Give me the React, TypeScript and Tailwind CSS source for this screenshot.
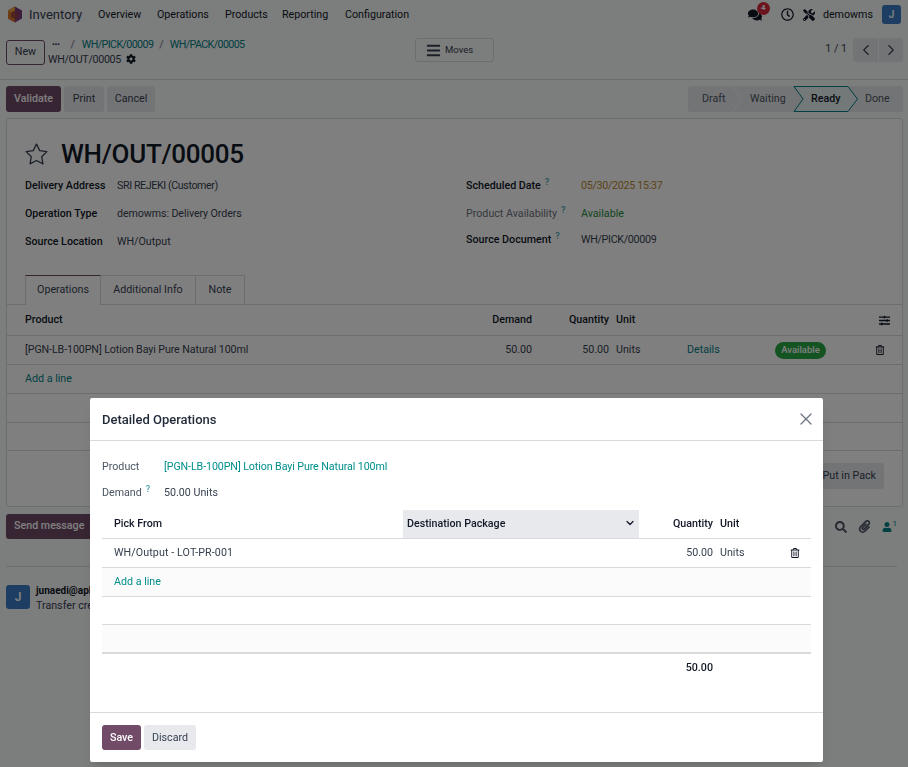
import React from 'react';
import { FaBars, FaCog, FaComments, FaPaperclip, FaRegClock, FaRegTrashAlt, FaSearch, FaSlidersH, FaTools, FaUser } from 'react-icons/fa';
import { FiChevronDown, FiChevronLeft, FiChevronRight, FiStar, FiX } from 'react-icons/fi';

const font = { fontFamily: 'Roboto, "Noto Sans", sans-serif' };

const Logo = () => (
  <svg width="16" height="17" viewBox="0 0 16 17">
    <polygon points="8,0.5 15,4.5 15,12.5 8,16.5 1,12.5 1,4.5" fill="#7d3c7c" />
    <polygon points="8,0.5 1,4.5 1,12.5 8,16.5 8,8.5" fill="#d9792a" />
    <polygon points="8,0.5 1,4.5 4,6.5 8,4.5" fill="#e8a33c" />
    <polygon points="8,4.5 12,6.5 12,11 8,13 4,11 4,6.5" fill="#8f3f3f" opacity="0.8" />
  </svg>
);

const Help = () => <sup className="text-[9px] font-semibold text-[#4fa9ae] ml-1 -top-1 relative">?</sup>;

const FieldRow = ({ label, value, h = 'h-7', w = 'w-[92px]', valueClass = 'text-[#374151]', labelClass = 'font-medium text-[#111827]', help = false }: { label: string; value: string; h?: string; w?: string; valueClass?: string; labelClass?: string; help?: boolean }) => (
  <div className={`flex items-center ${h}`}>
    <div className={`${w} shrink-0 ${labelClass}`}>
      {label}
      {help && <Help />}
    </div>
    <div className={valueClass}>{value}</div>
  </div>
);

const Page = () => (
  <div className="h-[767px] bg-[#f9fafb] text-[10.7px] text-[#374151] overflow-hidden">
    {/* top menu */}
    <div className="h-[29px] flex items-center pl-[7px] pr-[7px]">
      <Logo />
      <span className="ml-[6px] text-[13px] text-[#374151] w-[69px] pt-px">Inventory</span>
      <nav className="flex text-[#111827] pt-px">
        <span className="w-[59px]">Overview</span>
        <span className="w-[68px]">Operations</span>
        <span className="w-[57px]">Products</span>
        <span className="w-[63px]">Reporting</span>
        <span>Configuration</span>
      </nav>
      <div className="ml-auto flex items-center text-[#111827]">
        <div className="relative mr-[19px]">
          <FaComments size={14} />
          <span className="absolute -top-[6px] left-[9px] w-[13px] h-[13px] rounded-full bg-[#d9283a] text-white text-[8px] font-bold flex items-center justify-center">4</span>
        </div>
        <FaRegClock size={13} className="mr-[9px]" />
        <FaTools size={12} className="mr-[8px]" />
        <span className="mr-[9px] pt-px">demowms</span>
        <span className="w-[19px] h-[19px] rounded-[3px] bg-[#3b7cc4] text-white text-[10px] font-semibold flex items-center justify-center">J</span>
      </div>
    </div>

    {/* control panel */}
    <div className="h-[51px] border-b border-[#d8dadd] flex items-center pl-[6px] pr-[5px] relative">
      <button className="w-[39px] h-[25px] -mt-[4px] border border-[#714b67] rounded-[3px] text-[#374151] flex items-center justify-center">New</button>
      <div className="ml-[7px] leading-[15px] -mt-[5px]">
        <div className="flex items-center">
          <span className="font-bold text-[#374151] text-[8px] tracking-tighter">•••</span>
          <span className="ml-[11px] text-[#6b7280]">/</span>
          <span className="ml-[7px] text-[#017e84] tracking-[-0.6px]">WH/PICK/00009</span>
          <span className="ml-[6px] text-[#6b7280]">/</span>
          <span className="ml-[6px] text-[#017e84] tracking-[-0.6px]">WH/PACK/00005</span>
        </div>
        <div className="flex items-center -ml-[4px]">
          <span className="tracking-[-0.3px]">WH/OUT/00005</span>
          <FaCog size={10} className="ml-[5px] text-[#111827]" />
        </div>
      </div>
      <button className="absolute left-[415px] top-[9px] w-[79px] h-[24px] border border-[#d8dadd] rounded-[3px] flex items-center pl-[10px] gap-[4px] text-[9.5px]">
        <FaBars size={15} />
        Moves
      </button>
      <div className="ml-auto flex items-center -mt-[9px]">
        <span className="mr-[6px]">1 / 1</span>
        <div className="flex gap-px">
          <span className="w-[25px] h-[24px] bg-[#e7e9ed] rounded-l-[3px] flex items-center justify-center"><FiChevronLeft size={18} strokeWidth={1.5} /></span>
          <span className="w-[24px] h-[24px] bg-[#e7e9ed] rounded-r-[3px] flex items-center justify-center"><FiChevronRight size={18} strokeWidth={1.5} /></span>
        </div>
      </div>
    </div>

    {/* action row */}
    <div className="h-[38px] flex items-center pl-[6px] pr-[5px]">
      <div className="flex gap-[3px]">
        <button className="w-[55px] h-[26px] rounded-[3px] bg-[#714b67] text-white font-medium">Validate</button>
        <button className="w-[40px] h-[26px] rounded-[3px] bg-[#e7e9ed]">Print</button>
        <button className="w-[48px] h-[26px] rounded-[3px] bg-[#e7e9ed]">Cancel</button>
      </div>
      <div className="ml-auto relative w-[215px] h-[26px] bg-[#e7e9ed] rounded-[3px] flex items-center text-[#4b5563]">
        <svg className="absolute inset-0" width="215" height="26" viewBox="0 0 215 26">
          <polyline points="44,0 54,13 44,26" fill="none" stroke="#f5f6f7" strokeWidth="1" />
          <polygon points="106,0.5 160,0.5 169.5,13 160,25.5 106,25.5 115,13" fill="#e6f2f3" stroke="#017e84" strokeWidth="1" />
        </svg>
        <span className="relative w-[62px] pl-[14px]">Draft</span>
        <span className="relative w-[61px]">Waiting</span>
        <span className="relative w-[54px] text-[#111827] font-medium">Ready</span>
        <span className="relative">Done</span>
      </div>
    </div>

    {/* sheet */}
    <div className="mx-[6px] mr-[5px] h-[389px] bg-white border border-[#d8dadd] rounded-[3px] relative">
      <div className="pl-[18px] pr-[18px] pt-[15px]">
        <div className="flex items-center h-[40px]">
          <FiStar size={25} strokeWidth={1.25} className="text-[#374151] -ml-px" />
          <h1 className="ml-[12px] text-[26px] font-medium text-[#111827] leading-none tracking-[-0.3px]">WH/OUT/00005</h1>
        </div>
        <div className="flex -mt-[2px]">
          <div className="w-[441px]">
            <FieldRow label="Delivery Address" value="SRI REJEKI (Customer)" valueClass="text-[#374151] tracking-[-0.4px]" />
            <FieldRow label="Operation Type" value="demowms: Delivery Orders" valueClass="text-[#374151] tracking-[-0.1px]" />
            <FieldRow label="Source Location" value="WH/Output" />
          </div>
          <div>
            <FieldRow label="Scheduled Date" help w="w-[115px]" value="05/30/2025 15:37" valueClass="text-[#b8862d] tracking-[-0.3px]" />
            <FieldRow label="Product Availability" help w="w-[115px]" value="Available" labelClass="text-[#6b7280]" valueClass="text-[#1f8a3c]" />
            <FieldRow label="Source Document" help w="w-[115px]" value="WH/PICK/00009" valueClass="text-[#374151] tracking-[-0.3px]" h="h-[24px]" />
          </div>
        </div>
        <div className="flex mt-[19px] h-[30px] text-[#374151]">
          <div className="w-[76px] border border-b-0 border-[#d8dadd] border-t-[#714b67] flex items-center justify-center bg-white">Operations</div>
          <div className="w-[95px] border border-l-0 border-[#d8dadd] flex items-center justify-center">Additional Info</div>
          <div className="w-[49px] border border-l-0 border-[#d8dadd] flex items-center justify-center">Note</div>
        </div>
      </div>
      <div className="border-t border-[#d8dadd] -mt-px" />
      <div className="h-[31px] flex items-center border-b border-[#d8dadd] font-medium text-[#111827] pl-[18px] pr-[18px]">
        <span className="w-[462px]">Product</span>
        <span className="w-[45px] text-right">Demand</span>
        <span className="w-[77px] text-right">Quantity</span>
        <span className="ml-[7px]">Unit</span>
        <FaSlidersH size={11} className="ml-auto -mr-[6px]" />
      </div>
      <div className="h-[29px] flex items-center border-b border-[#d8dadd] pl-[18px] pr-[18px]">
        <span className="w-[462px] tracking-[-0.1px]">[PGN-LB-100PN] Lotion Bayi Pure Natural 100ml</span>
        <span className="w-[45px] text-right">50.00</span>
        <span className="w-[77px] text-right">50.00</span>
        <span className="ml-[7px] w-[71px]">Units</span>
        <span className="text-[#017e84] w-[88px]">Details</span>
        <span className="w-[51px] h-[17px] rounded-full bg-[#28a745] text-white text-[9.5px] font-medium flex items-center justify-center">Available</span>
        <FaRegTrashAlt size={10} className="ml-auto -mr-[1px] text-[#111827]" />
      </div>
      <div className="h-[29px] flex items-center border-b border-[#d8dadd] pl-[18px] text-[#017e84]">Add a line</div>
      <div className="h-[29px] border-b border-[#d8dadd]" />
      <div className="h-[28px] border-b border-[#d8dadd]" />
      <button className="absolute right-[18px] top-[344px] w-[90px] h-[26px] rounded-[3px] bg-[#e7e9ed] text-right pr-[8px]">Put in Pack</button>
    </div>

    {/* chatter */}
    <div className="mt-[7px] pl-[6px] pr-[11px] h-[25px] flex items-center">
      <button className="w-[95px] h-[25px] rounded-[3px] bg-[#714b67] text-white font-medium text-left pl-[8px]">Send message</button>
      <div className="ml-auto flex items-center text-[#4b5563]">
        <FaSearch size={12} className="mr-[11px]" />
        <FaPaperclip size={13} className="mr-[11px]" />
        <FaUser size={10} className="text-[#017e84]" />
        <span className="text-[8px] text-[#017e84] -mt-[5px] ml-[1px]">1</span>
      </div>
    </div>
    <div className="mx-[6px] mr-[11px] mt-[27px] border-t border-[#d8dadd]" />
    <div className="mt-[18px] pl-[6px] flex">
      <span className="w-[24px] h-[24px] rounded-[3px] bg-[#3b7cc4] text-white text-[12px] font-semibold flex items-center justify-center">J</span>
      <div className="ml-[6px] -mt-[2px] leading-[15px]">
        <div className="text-[10px] font-bold text-[#111827]">junaedi@aplikasi</div>
        <div>Transfer created</div>
      </div>
    </div>
  </div>
);

const Modal = () => (
  <div className="fixed inset-0 bg-black/50 flex items-start justify-center pt-[398px] pl-[5px]">
    <div className="w-[733px] h-[364px] bg-white rounded-[2px] shadow-lg flex flex-col text-[10.7px] text-[#374151]">
      <div className="h-[43px] shrink-0 border-b border-[#d8dadd] flex items-center pl-[12px] pr-[7px]">
        <h2 className="text-[13px] font-medium text-[#1f2937] pt-px">Detailed Operations</h2>
        <FiX size={20} strokeWidth={1.5} className="ml-auto text-[#6b7280]" />
      </div>
      <div className="flex-1 px-[12px] pt-[13px]">
        <div className="flex items-center h-[26px]">
          <span className="w-[62px] text-[#4b5563]">Product</span>
          <span className="text-[#008f8c] tracking-[-0.1px]">[PGN-LB-100PN] Lotion Bayi Pure Natural 100ml</span>
        </div>
        <div className="flex items-center h-[26px]">
          <span className="w-[62px] text-[#4b5563]">Demand<Help /></span>
          <span>50.00 Units</span>
        </div>
        <div className="mt-[4px] flex h-[29px] items-center border-b border-[#d8dadd] font-medium text-[#111827]">
          <span className="w-[301px] pl-[12px]">Pick From</span>
          <div className="w-[236px] h-full bg-[#e7e9ed] flex items-center pl-[4px] pr-[3px]">
            Destination Package
            <FiChevronDown size={12} strokeWidth={2.5} className="ml-auto mb-[2px]" />
          </div>
          <span className="w-[74px] text-right">Quantity</span>
          <span className="ml-[7px]">Unit</span>
        </div>
        <div className="flex h-[29px] items-center border-b border-[#d8dadd]">
          <span className="w-[537px] pl-[12px] tracking-[0.1px]">WH/Output - LOT-PR-001</span>
          <span className="w-[74px] text-right">50.00</span>
          <span className="ml-[7px] w-[70px]">Units</span>
          <FaRegTrashAlt size={10} className="text-[#111827]" />
        </div>
        <div className="flex h-[29px] items-center border-b border-[#d8dadd] bg-[#fbfbfb] pl-[12px] text-[#008f8c]">Add a line</div>
        <div className="h-[28px] border-b border-[#d8dadd]" />
        <div className="h-[29px] bg-[#fbfbfb] border-b-2 border-[#d8dadd]" />
        <div className="flex h-[27px] pt-px items-center font-medium text-[#111827]">
          <span className="w-[611px] text-right">50.00</span>
        </div>
      </div>
      <div className="h-[50px] shrink-0 border-t border-[#d8dadd] flex items-center gap-[3px] px-[12px]">
        <button className="w-[39px] h-[25px] pt-px rounded-[3px] bg-[#714b67] text-white font-medium">Save</button>
        <button className="w-[52px] h-[25px] pt-px rounded-[3px] bg-[#e7e9ed]">Discard</button>
      </div>
    </div>
  </div>
);

export default function App() {
  return (
    <div style={font}>
      <Page />
      <Modal />
    </div>
  );
}
